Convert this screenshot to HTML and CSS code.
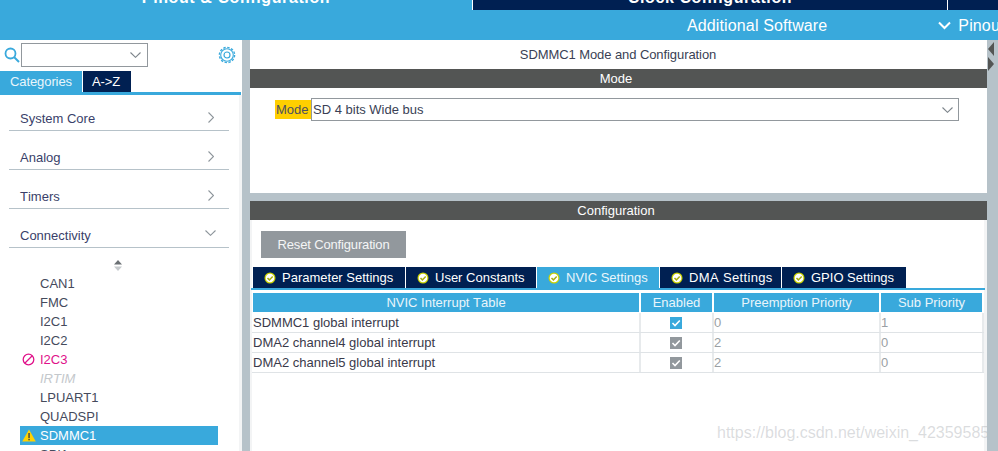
FILE: index.html
```html
<!DOCTYPE html>
<html lang="en">
<head>
<meta charset="utf-8">
<title>SDMMC1 Mode and Configuration</title>
<link rel="stylesheet" href="styles.css">
</head>
<body>
<header class="top">
  <div class="tabs-main">
    <div class="tab-main tab-main-a"><span>Pinout &amp; Configuration</span></div>
    <div class="tab-main tab-main-b"><span>Clock Configuration</span></div>
    <div class="tab-main tab-main-c"></div>
  </div>
  <div class="subbar">
    <span class="sub-a">Additional Software</span>
    <svg class="sub-chev" width="13" height="9" viewBox="0 0 13 9"><path d="M1 1.500 L6.500 7 L12 1.500" fill="none" stroke="#fff" stroke-width="2"/></svg>
    <span class="sub-b">Pinout</span>
  </div>
</header>
<div class="body">
  <aside class="side">
    <div class="search">
      <svg class="lens" width="16" height="18" viewBox="0 0 16 18"><circle cx="6.500" cy="7.500" r="5" fill="none" stroke="#39a9dc" stroke-width="1.800"/><path d="M10 11 L15 16" stroke="#39a9dc" stroke-width="2"/></svg>
      <div class="combo">
        <svg width="11" height="6" viewBox="0 0 11 6"><path d="M0.500 0.500 L5.500 5.300 L10.500 0.500" fill="none" stroke="#7d858b" stroke-width="1.100"/></svg>
      </div>
      <svg class="gear" width="18" height="18" viewBox="0 0 18 18"><circle cx="9" cy="9" r="3" fill="none" stroke="#39a9dc" stroke-width="1.200"/><circle cx="9" cy="9" r="6.300" fill="none" stroke="#39a9dc" stroke-width="1.100"/><circle cx="9" cy="9" r="7.600" fill="none" stroke="#39a9dc" stroke-width="1.400" stroke-dasharray="2.400 1.580"/></svg>
    </div>
    <div class="side-tabs">
      <div class="side-tab on">Categories</div>
      <div class="side-tab">A-&gt;Z</div>
    </div>
    <div class="side-list">
      <nav class="cats">
        <div class="cat">System Core<svg width="6" height="11" viewBox="0 0 6 11"><path d="M0.500 0.500 L5.500 5.500 L0.500 10.500" fill="none" stroke="#8d959b" stroke-width="1.100"/></svg></div>
        <div class="cat">Analog<svg width="6" height="11" viewBox="0 0 6 11"><path d="M0.500 0.500 L5.500 5.500 L0.500 10.500" fill="none" stroke="#8d959b" stroke-width="1.100"/></svg></div>
        <div class="cat">Timers<svg width="6" height="11" viewBox="0 0 6 11"><path d="M0.500 0.500 L5.500 5.500 L0.500 10.500" fill="none" stroke="#8d959b" stroke-width="1.100"/></svg></div>
        <div class="cat cat-open">Connectivity<svg width="11" height="6" viewBox="0 0 11 6"><path d="M0.500 0.500 L5.500 5.300 L10.500 0.500" fill="none" stroke="#8d959b" stroke-width="1.100"/></svg></div>
      </nav>
      <svg class="sorter" width="8" height="11" viewBox="0 0 8 11"><path d="M4 0 L8 4.500 H0 Z" fill="#6b7074"/><path d="M4 11 L8 6.500 H0 Z" fill="#c5c9cc"/></svg>
      <ul class="periph">
        <li>CAN1</li>
        <li>FMC</li>
        <li>I2C1</li>
        <li>I2C2</li>
        <li class="bad"><svg class="pico" width="13" height="13" viewBox="0 0 13 13"><circle cx="6.500" cy="6.500" r="5.300" fill="none" stroke="#e0128a" stroke-width="1.300"/><path d="M3 10 L10 3" stroke="#e0128a" stroke-width="1.300"/></svg>I2C3</li>
        <li class="off">IRTIM</li>
        <li>LPUART1</li>
        <li>QUADSPI</li>
        <li class="sel"><svg class="pico" width="14" height="13" viewBox="0 0 14 13"><path d="M7 0.500 L13.800 12.500 H0.200 Z" fill="#ffd200"/><rect x="6.300" y="4" width="1.500" height="5" fill="#4a4a3a"/><rect x="6.300" y="9.800" width="1.500" height="1.500" fill="#4a4a3a"/></svg>SDMMC1</li>
        <li>SPI1</li>
      </ul>
    </div>
  </aside>
  <main class="main">
    <section class="mode">
      <h1 class="title">SDMMC1 Mode and Configuration</h1>
      <div class="band">Mode</div>
      <div class="mode-row">
        <label class="mode-label">Mode</label>
        <div class="mode-select">SD 4 bits Wide bus
          <svg width="11" height="6" viewBox="0 0 11 6"><path d="M0.500 0.500 L5.500 5.300 L10.500 0.500" fill="none" stroke="#7d858b" stroke-width="1.100"/></svg>
        </div>
      </div>
    </section>
    <section class="conf">
      <div class="band">Configuration</div>
      <div class="conf-body">
        <button class="reset" type="button">Reset Configuration</button>
        <div class="conf-tabs">
          <div class="ct"><svg class="ok" viewBox="0 0 12 12"><circle cx="6" cy="6" r="5.500" fill="#c9d200"/><circle cx="6" cy="6" r="4.300" fill="#fff"/><path d="M3.500 6 L5.400 7.900 L8.700 4.400" fill="none" stroke="#a8ae10" stroke-width="1.500"/></svg>Parameter Settings</div>
          <div class="ct"><svg class="ok" viewBox="0 0 12 12"><circle cx="6" cy="6" r="5.500" fill="#c9d200"/><circle cx="6" cy="6" r="4.300" fill="#fff"/><path d="M3.500 6 L5.400 7.900 L8.700 4.400" fill="none" stroke="#a8ae10" stroke-width="1.500"/></svg>User Constants</div>
          <div class="ct on"><svg class="ok" viewBox="0 0 12 12"><circle cx="6" cy="6" r="5.500" fill="#c9d200"/><circle cx="6" cy="6" r="4.300" fill="#fff"/><path d="M3.500 6 L5.400 7.900 L8.700 4.400" fill="none" stroke="#a8ae10" stroke-width="1.500"/></svg>NVIC Settings</div>
          <div class="ct ct-wide"><svg class="ok" viewBox="0 0 12 12"><circle cx="6" cy="6" r="5.500" fill="#c9d200"/><circle cx="6" cy="6" r="4.300" fill="#fff"/><path d="M3.500 6 L5.400 7.900 L8.700 4.400" fill="none" stroke="#a8ae10" stroke-width="1.500"/></svg>DMA Settings</div>
          <div class="ct"><svg class="ok" viewBox="0 0 12 12"><circle cx="6" cy="6" r="5.500" fill="#c9d200"/><circle cx="6" cy="6" r="4.300" fill="#fff"/><path d="M3.500 6 L5.400 7.900 L8.700 4.400" fill="none" stroke="#a8ae10" stroke-width="1.500"/></svg>GPIO Settings</div>
        </div>
        <div class="table">
          <div class="row head"><div>NVIC Interrupt Table</div><div>Enabled</div><div>Preemption Priority</div><div>Sub Priority</div></div>
          <div class="row"><div class="name">SDMMC1 global interrupt</div><div class="chk"><svg class="box" viewBox="0 0 12 12"><rect width="12" height="12" fill="#39a9dc"/><path d="M2.500 6 L5 8.500 L9.800 3.500" fill="none" stroke="#fff" stroke-width="1.600"/></svg></div><div class="num">0</div><div class="num">1</div></div>
          <div class="row"><div class="name">DMA2 channel4 global interrupt</div><div class="chk"><svg class="box" viewBox="0 0 12 12"><rect width="12" height="12" fill="#92989d"/><path d="M2.500 6 L5 8.500 L9.800 3.500" fill="none" stroke="#fff" stroke-width="1.600"/></svg></div><div class="num">2</div><div class="num">0</div></div>
          <div class="row"><div class="name">DMA2 channel5 global interrupt</div><div class="chk"><svg class="box" viewBox="0 0 12 12"><rect width="12" height="12" fill="#92989d"/><path d="M2.500 6 L5 8.500 L9.800 3.500" fill="none" stroke="#fff" stroke-width="1.600"/></svg></div><div class="num">2</div><div class="num">0</div></div>
        </div>
      </div>
    </section>
    <div class="watermark">https://blog.csdn.net/weixin_42359585</div>
  </main>
  <div class="rail">
    <div class="arrow arrow-l"></div>
    <div class="arrow arrow-r"></div>
  </div>
</div>
</body>
</html>
```
FILE: styles.css
```css
* { box-sizing: border-box; }
html, body { margin: 0; height: 100%; overflow: hidden; }
body { width: 998px; height: 451px; font-family: "Liberation Sans", Arial, sans-serif; font-size: 13px; font-kerning: none; color: #3a3f55; background: #fff; display: flex; flex-direction: column; }
.top { flex: none; height: 40px; background: #39a9dc; color: #fff; overflow: hidden; }
.tabs-main { height: 10px; display: flex; gap: 1px; background: #fff; }
.tab-main { display: flex; align-items: flex-end; justify-content: center; overflow: hidden; font-size: 16px; font-weight: bold; letter-spacing: 0.6px; line-height: 20px; }
.tab-main span { flex: none; margin-bottom: 2px; }
.tab-main-a { width: 472px; background: #39a9dc; }
.tab-main-b { width: 474px; background: #002052; }
.tab-main-c { flex: 1; background: #002052; }
.subbar { height: 30px; display: flex; align-items: center; font-size: 16px; letter-spacing: 0.13px; padding: 1px 0 0 687px; white-space: nowrap; }
.sub-chev { margin-left: 111px; flex: none; }
.sub-b { margin-left: 7px; }
.body { flex: 1; display: flex; min-height: 0; }
.side { flex: none; width: 250px; display: flex; flex-direction: column; border-right: 8px solid #b6c2c9; overflow: hidden; }
.search { flex: none; height: 29px; display: flex; align-items: center; padding: 0 6px 0 4px; }
.lens { flex: none; margin-top: 1px; }
.combo { width: 127px; height: 24px; margin-left: 1px; border: 1px solid #92989d; display: flex; align-items: center; justify-content: flex-end; padding-right: 6px; }
.gear { margin-left: auto; flex: none; }
.side-tabs { flex: none; display: flex; gap: 1px; height: 24px; border-bottom: 3px solid #39a9dc; margin: 2px 1px 0 0; }
.side-tab { width: 82px; background: #39a9dc; color: #e9f5fb; padding-top: 3px; text-align: center; letter-spacing: -0.1px; }
.side-tab + .side-tab { width: 48px; background: #002052; color: #fff; padding-right: 2px; }
.side-list { flex: 1; border-right: 3px solid #f3f4f5; }
.cats { padding: 0 10px 0 9px; }
.cat { height: 39px; border-bottom: 1px solid #b6c2c9; display: flex; align-items: flex-end; justify-content: space-between; padding: 0 15px 4px 11px; color: #3a3f6a; }
.cat:first-child { height: 36px; }
.cat svg { margin-bottom: 3px; flex: none; }
.cat-open { padding-right: 13px; }
.cat-open svg { margin-bottom: 7px; }
.sorter { display: block; margin: 12px 0 0 114px; }
.periph { list-style: none; margin: 3px 0 0 20px; padding: 0; width: 198px; }
.periph li { height: 19px; line-height: 19px; padding-left: 20px; position: relative; color: #454a5c; }
.periph .bad { color: #e0128a; }
.periph .off { color: #c4c8cc; font-style: italic; }
.periph .sel { background: #39a9dc; color: #fff; }
.pico { position: absolute; left: 2px; top: 3px; }
.main { flex: none; width: 737px; position: relative; display: flex; flex-direction: column; overflow: hidden; }
.mode { flex: none; height: 161px; border-bottom: 8px solid #b6c2c9; }
.title { margin: 0; height: 29px; line-height: 29px; font-size: 13px; font-weight: normal; text-align: center; letter-spacing: -0.08px; padding-right: 1px; }
.band { height: 19px; line-height: 19px; background: #535554; color: #fff; text-align: center; padding-right: 5px; }
.mode-row { display: flex; align-items: flex-start; margin: 10px 0 0 25px; width: 684px; }
.mode-label { flex: none; width: 36px; height: 19px; margin-top: 2px; line-height: 19px; padding-left: 1px; background: #ffcf00; color: #4c5060; }
.mode-select { flex: 1; height: 23px; border: 1px solid #92989d; display: flex; align-items: center; justify-content: space-between; padding: 0 5px 0 1px; }
.conf { flex: 1; display: flex; flex-direction: column; min-height: 0; }
.conf-body { flex: 1; border-left: 2px solid #f3f4f5; border-right: 3px solid #f3f4f5; }
.reset { display: block; width: 145px; height: 27px; margin: 11px 0 0 9px; border: 0; background: #92989d; color: #f4f5f6; font: inherit; letter-spacing: -0.15px; padding: 0; }
.conf-tabs { display: grid; grid-template-columns: 152px 130px 122px 121px 124px; gap: 1px; margin: 9px 0 0 -1px; padding-left: 2px; height: 23px; border-bottom: 2px solid #39a9dc; width: 734px; }
.ct { height: 21px; background: #002052; color: #fff; display: flex; align-items: center; padding: 0 0 0 11px; white-space: nowrap; }
.ct.on { background: #39a9dc; color: #eaf6fb; }
.ct-wide { letter-spacing: 0.35px; }
.ok { width: 12px; height: 12px; flex: none; margin-right: 6px; }
.table { margin: 3px 0 0 0; width: 732px; }
.row { display: grid; grid-template-columns: 389px 73px 167px 103px; height: 20px; border-bottom: 1px solid #dfe3e6; }
.row > div { border-right: 2px solid #e7eaec; display: flex; align-items: center; min-width: 0; }
.head { height: 19px; border-bottom: 0; margin-bottom: 1px; }
.head > div { background: #39a9dc; color: #e9f5fb; justify-content: center; border-right: 2px solid #fff; }
.head > div:first-child { border-left: 1px solid #fff; }
.name { white-space: nowrap; padding-left: 1px; color: #3a3a4a; }
.chk { justify-content: center; padding-right: 1px; }
.box { width: 12px; height: 12px; }
.num { color: #9a9fa4; }
.watermark { position: absolute; left: 467px; top: 384px; font-size: 16px; color: rgba(150,155,160,0.35); white-space: nowrap; }
.rail { flex: 1; background: #b6c2c9; position: relative; }
.arrow { position: absolute; left: 1px; width: 0; height: 0; border-top: 7px solid transparent; border-bottom: 7px solid transparent; }
.arrow-l { top: 2px; border-right: 6px solid #535554; }
.arrow-r { top: 17px; border-left: 6px solid #535554; }
```
